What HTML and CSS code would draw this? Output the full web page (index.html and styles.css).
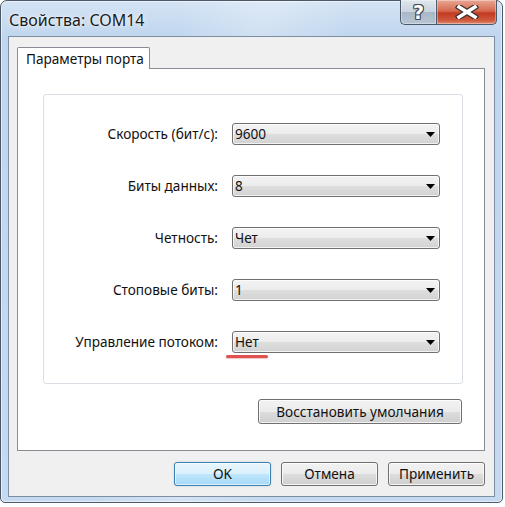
FILE: index.html
```html
<!DOCTYPE html>
<html lang="ru">
<head>
<meta charset="utf-8">
<title>Свойства: COM14</title>
<link rel="stylesheet" href="styles.css">
</head>
<body>
<div class="window">
  <div class="titlebar">
    <div class="title">Свойства: COM14</div>
    <div class="caption-btns">
      <div class="cbtn help"><span class="qmark">?</span></div>
      <div class="cbtn close">
        <svg width="24" height="14" viewBox="0 0 24 14">
          <path d="M4 2 L20 12 M20 2 L4 12" stroke="#3b3030" stroke-width="6" stroke-linecap="square" fill="none"/>
          <path d="M4 2 L20 12 M20 2 L4 12" stroke="#ffffff" stroke-width="3.6" stroke-linecap="square" fill="none"/>
        </svg>
      </div>
    </div>
  </div>
  <div class="client">
    <div class="tabs"><div class="tab">Параметры порта</div></div>
    <div class="panel">
      <div class="group">
        <div class="label">Скорость (бит/с):</div>
        <div class="combo"><span class="value">9600</span><svg class="arrow" width="9" height="5" viewBox="0 0 9 5"><polygon points="0,0 9,0 4.5,5" fill="#000"/></svg></div>
        <div class="label">Биты данных:</div>
        <div class="combo"><span class="value">8</span><svg class="arrow" width="9" height="5" viewBox="0 0 9 5"><polygon points="0,0 9,0 4.5,5" fill="#000"/></svg></div>
        <div class="label">Четность:</div>
        <div class="combo"><span class="value">Чет</span><svg class="arrow" width="9" height="5" viewBox="0 0 9 5"><polygon points="0,0 9,0 4.5,5" fill="#000"/></svg></div>
        <div class="label">Стоповые биты:</div>
        <div class="combo"><span class="value">1</span><svg class="arrow" width="9" height="5" viewBox="0 0 9 5"><polygon points="0,0 9,0 4.5,5" fill="#000"/></svg></div>
        <div class="label">Управление потоком:</div>
        <div class="combo"><span class="value">Нет</span><svg class="arrow" width="9" height="5" viewBox="0 0 9 5"><polygon points="0,0 9,0 4.5,5" fill="#000"/></svg><span class="mark"></span></div>
      </div>
      <div class="restore-row"><div class="btn restore">Восстановить умолчания</div></div>
    </div>
    <div class="footer">
      <div class="btn default">OK</div>
      <div class="btn">Отмена</div>
      <div class="btn">Применить</div>
    </div>
  </div>
</div>
</body>
</html>
```
FILE: styles.css
```css
* { box-sizing: border-box; }
html, body { margin: 0; padding: 0; }
body {
  background: #ffffff;
  width: 505px;
  height: 507px;
  font-family: "Noto Sans", "Liberation Sans", sans-serif;
  font-size: 13.6px;
  color: #111;
}
.window {
  width: 503px;
  height: 503px;
  border: 1px solid #4c5867;
  border-radius: 7px 7px 5px 5px;
  background:
    linear-gradient(100deg, rgba(255,255,255,0) 30%, rgba(255,255,255,0.25) 45%, rgba(255,255,255,0) 60%),
    linear-gradient(180deg, #d3e3f4 0, #c0d6ee 36px, #c5daf0 100%);
  display: flex;
  flex-direction: column;
  box-shadow: inset 0 0 0 1px rgba(255,255,255,0.55);
}
.titlebar {
  height: 35px;
  display: flex;
  align-items: flex-start;
  padding: 0 5px 0 8px;
}
.title {
  flex: 1;
  font-size: 16px;
  line-height: 20px;
  padding-top: 9px;
  color: #1a1a1a;
  text-shadow: 0 0 6px rgba(255,255,255,0.9), 0 0 2px rgba(255,255,255,0.8);
}
.caption-btns {
  display: flex;
  margin-top: -1px;
  height: 25px;
}
.cbtn {
  height: 25px;
  border: 1px solid #4a5868;
  border-top: none;
  display: flex;
  align-items: center;
  justify-content: center;
  box-shadow: inset 0 0 0 1px rgba(255,255,255,0.35);
}
.help {
  width: 36px;
  border-right: none;
  border-radius: 0 0 0 5px;
  background: linear-gradient(180deg, #dfe6ee 0%, #c9d4df 48%, #a9b8c8 52%, #b7c5d3 100%);
}
.qmark {
  font-family: "DejaVu Sans", sans-serif;
  font-weight: bold;
  font-size: 19px;
  line-height: 20px;
  color: #fff;
  text-shadow: 1px 0 0 #4c4c4c, -1px 0 0 #4c4c4c, 0 1px 0 #4c4c4c, 0 -1px 0 #4c4c4c, 1px 1px 0 #4c4c4c, -1px -1px 0 #4c4c4c, 1px -1px 0 #4c4c4c, -1px 1px 0 #4c4c4c;
  margin-top: -1px;
}
.close {
  width: 61px;
  border-radius: 0 0 5px 0;
  background: linear-gradient(180deg, #e9a896 0%, #d66a50 45%, #c23a20 55%, #cf5a3e 85%, #e08a70 100%);
}
.client {
  flex: 1;
  margin: 0 7px 5px 7px;
  border: 1px solid #7d8ea3;
  background: #f0f0f0;
  padding: 10px 9px 0 8px;
  display: flex;
  flex-direction: column;
}
.tabs {
  display: flex;
  position: relative;
  z-index: 1;
  margin-bottom: -1px;
}
.tab {
  height: 22px;
  width: 133px;
  background: #ffffff;
  border: 1px solid #898c95;
  border-bottom: none;
  border-radius: 2px 2px 0 0;
  padding: 0 8px;
  line-height: 20px;
  padding-top: 1px;
  white-space: nowrap;
}
.panel {
  height: 383px;
  background: #ffffff;
  border: 1px solid #898c95;
  padding: 25px 21px 0 25px;
  display: flex;
  flex-direction: column;
}
.group {
  height: 290px;
  border: 1px solid #d9dfe4;
  border-radius: 3px;
  display: grid;
  grid-template-columns: 1fr 208px;
  grid-auto-rows: 22px;
  column-gap: 14px;
  row-gap: 30px;
  padding: 28px 22px 0 0;
  align-items: center;
}
.label {
  text-align: right;
  white-space: nowrap;
  line-height: 18px;
}
.combo {
  position: relative;
  height: 22px;
  border: 1px solid #707070;
  border-radius: 3px;
  background: linear-gradient(180deg, #f3f3f3 0%, #ececec 50%, #dedede 51%, #d2d2d2 100%);
  box-shadow: inset 0 0 0 1px rgba(255,255,255,0.7);
  display: flex;
  align-items: center;
  padding: 0 4px 0 2px;
}
.combo .value {
  flex: 1;
  line-height: 18px;
}
.combo .arrow { display: block; }
.mark {
  position: absolute;
  left: -7px;
  top: 23px;
  width: 42px;
  height: 3px;
  border-radius: 2px;
  background: #e0524e;
  box-shadow: 0 1px 1px rgba(200,60,60,0.3);
}
.restore-row {
  display: flex;
  justify-content: flex-end;
  margin-top: 15px;
  padding-right: 1px;
}
.btn {
  height: 24px;
  border: 1px solid #707070;
  border-radius: 3px;
  background: linear-gradient(180deg, #f2f2f2 0%, #ebebeb 50%, #dddddd 51%, #cfcfcf 100%);
  box-shadow: inset 0 0 0 1px rgba(255,255,255,0.75);
  display: flex;
  align-items: center;
  justify-content: center;
  line-height: 18px;
  white-space: nowrap;
}
.restore {
  width: 204px;
  height: 25px;
}
.footer {
  display: flex;
  justify-content: flex-end;
  gap: 10px;
  margin-top: 11px;
}
.footer .btn { width: 97px; }
.btn.default {
  border-color: #3c7fb1;
  background: linear-gradient(180deg, #eaf6fd 0%, #d9f0fc 50%, #bee6fd 51%, #a7d9f5 100%);
  box-shadow: inset 0 0 0 1px rgba(255,255,255,0.6), 0 0 2px rgba(60,127,177,0.3);
}
```
